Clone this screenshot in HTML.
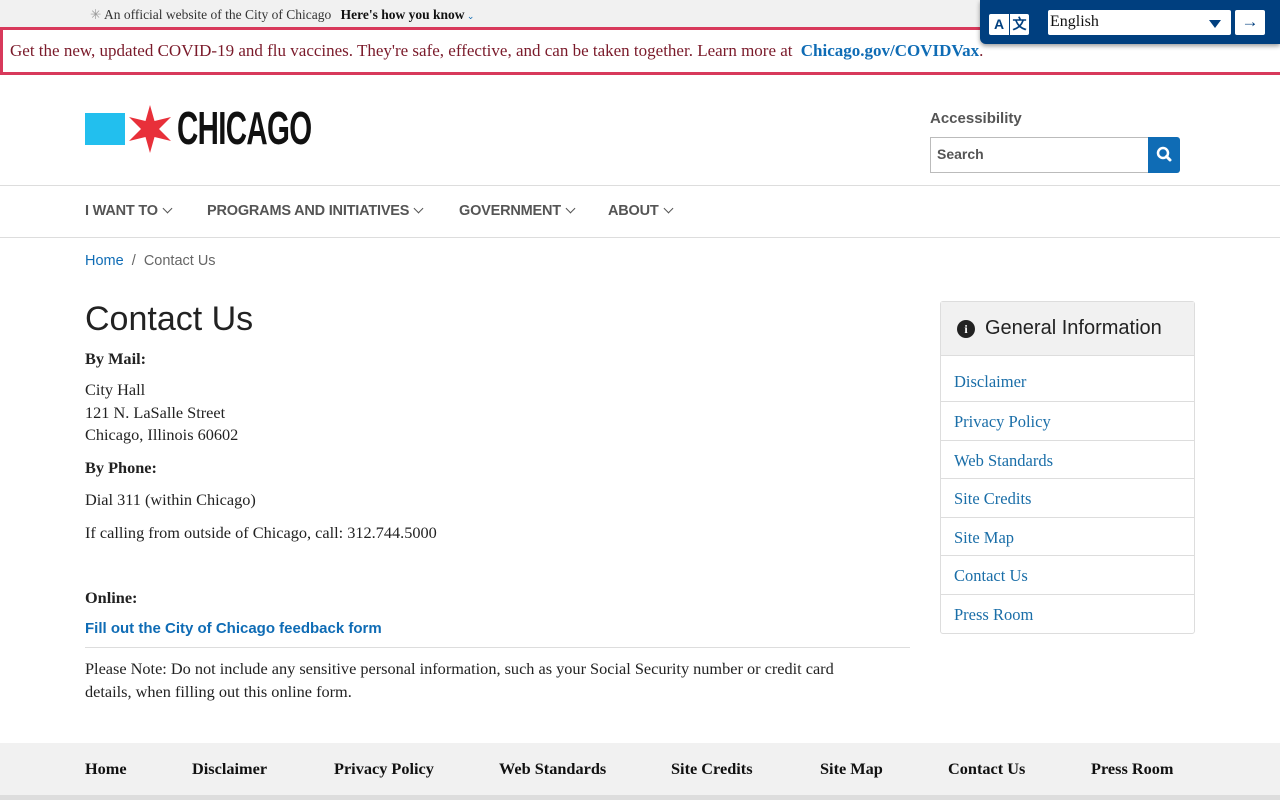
<!DOCTYPE html>
<html><head><meta charset="utf-8"><style>
*{box-sizing:border-box;margin:0;padding:0}
body{width:1280px;height:800px;overflow:hidden;background:#fff;font-family:"Liberation Serif",serif;color:#222;position:relative}
a{color:#0f6cb5;text-decoration:none}
.top{height:28px;background:#f1f1f1;font-size:13.5px;color:#333;padding-left:90px;line-height:30px}
.top b{margin-left:6px;color:#111}
.alert{position:absolute;top:27px;left:0;width:1280px;height:48px;border:3px solid #d8395b;border-right:none;font-size:17px;color:#7a1a2a;padding-left:7px;line-height:42px;white-space:nowrap}
.alert a{font-weight:bold;margin-left:4px}
.tr{position:absolute;top:0;left:980px;width:300px;height:44px;background:#003f7f;border-radius:0 0 0 6px;box-shadow:0 2px 5px rgba(0,0,0,.4)}
.az{position:absolute;left:9px;top:14px;width:40px;height:21px;background:#fff;border-radius:2px;font:bold 14px "Liberation Sans",sans-serif;color:#003f7f;display:flex}
.az span{width:20px;text-align:center;line-height:21px}
.az span+span{border-left:1px solid #003f7f}
.sel{position:absolute;left:68px;top:10px;width:183px;height:25px;background:#fff;border-radius:2px;font-size:16px;line-height:24px;padding-left:2px;color:#111}
.sel i{position:absolute;right:10px;top:10px;border:6px solid transparent;border-top:8px solid #003f7f;border-bottom:0}
.go{position:absolute;left:255px;top:10px;width:30px;height:25px;background:#fff;border-radius:2px;color:#003f7f;font:bold 17px "Liberation Sans",sans-serif;text-align:center;line-height:24px}
.logo{position:absolute;top:105px;left:85px}
.sq{position:absolute;left:0;top:8px;width:40px;height:32px;background:#22bfee}
.ch{position:absolute;left:92px;top:-4px;font:bold 46px "Liberation Sans",sans-serif;letter-spacing:-1px;color:#111;transform:scaleX(.64);transform-origin:left;white-space:nowrap}
.acc{position:absolute;left:930px;top:110px;font:bold 15px "Liberation Sans",sans-serif;color:#555}
.srch{position:absolute;left:930px;top:137px;width:218px;height:36px;border:1px solid #bbb;border-right:none;font:bold 14px "Liberation Sans",sans-serif;color:#555;padding:8px 6px}
.sbtn{position:absolute;left:1148px;top:137px;width:32px;height:36px;background:#0f6cb5;border-radius:0 3px 3px 0}
.nav{position:absolute;top:185px;left:0;width:1280px;height:53px;border-top:1px solid #ddd;border-bottom:1px solid #ddd;font:bold 14.5px "Liberation Sans",sans-serif;color:#555;letter-spacing:-.2px}
.nav span{position:absolute;top:17px}
.nav span:after{content:"";display:inline-block;width:6px;height:6px;border-right:1.5px solid #555;border-bottom:1.5px solid #555;transform:rotate(45deg);margin-left:6px;position:relative;top:-3px}
.bc{position:absolute;top:253px;left:85px;font:14.5px "Liberation Sans",sans-serif;color:#666}
h1{position:absolute;top:300px;left:85px;font:500 34px "Liberation Sans",sans-serif;color:#222}
.main{position:absolute;left:85px;top:348px;width:825px;font-size:16.3px;line-height:22.5px}
.main p{position:absolute;left:0;white-space:nowrap}
.note{border-top:1px solid #ddd;width:825px;white-space:normal!important;padding-top:10px;padding-right:60px}
.side{position:absolute;left:940px;top:301px;width:255px;border:1px solid #ddd;border-radius:3px}
.sh{height:54px;background:#f1f1f1;border-bottom:1px solid #ddd;font:20px "Liberation Sans",sans-serif;color:#222;padding-left:16px;display:flex;align-items:center;gap:10px}
.sh i{width:18px;height:18px;border-radius:50%;background:#222;color:#fff;font:bold 12px "Liberation Serif",serif;text-align:center;line-height:18px;font-style:normal}
.side a{display:block;height:38.5px;border-bottom:1px solid #ddd;font-size:16.5px;padding:0 13px;line-height:40px;color:#1a6ea8}
.side a:first-of-type{height:46px;line-height:52px}
.side a:last-child{border-bottom:none}
.foot{position:absolute;top:743px;left:0;width:1280px;height:52px;background:#f1f1f1;font-weight:bold;font-size:16.3px;color:#111}
.foot span{position:absolute;top:16px}
.fb{position:absolute;top:795px;left:0;width:1280px;height:5px;background:#ddd}
</style></head><body>
<div class="top"><span style="color:#999">✳</span> An official website of the City of Chicago <b>Here's how you know</b><span style="color:#0f6cb5;font-size:9px"> ⌄</span></div>
<div class="alert">Get the new, updated COVID-19 and flu vaccines. They're safe, effective, and can be taken together. Learn more at <a>Chicago.gov/COVIDVax</a>.</div>
<div class="tr"><div class="az"><span>A</span><span>文</span></div><div class="sel">English<i></i></div><div class="go">→</div></div>
<div class="logo"><div class="sq"></div>
<svg style="position:absolute;left:44px;top:0" width="42" height="48" viewBox="-21 -24 42 48"><polygon fill="#e8303a" points="0,-24 4.5,-8 21,-12 9,0 21,12 4.5,8 0,24 -4.5,8 -21,12 -9,0 -21,-12 -4.5,-8"/></svg>
<div class="ch">CHICAGO</div></div>
<div class="acc">Accessibility</div>
<div class="srch">Search</div>
<div class="sbtn"><svg width="32" height="36" viewBox="0 0 32 36"><circle cx="15" cy="16" r="5" fill="none" stroke="#fff" stroke-width="2.5"/><line x1="18.5" y1="19.5" x2="22" y2="23" stroke="#fff" stroke-width="3" stroke-linecap="round"/></svg></div>
<div class="nav"><span style="left:85px">I WANT TO</span><span style="left:207px">PROGRAMS AND INITIATIVES</span><span style="left:459px">GOVERNMENT</span><span style="left:608px">ABOUT</span></div>
<div class="bc"><a>Home</a> &nbsp;/&nbsp; Contact Us</div>
<h1>Contact Us</h1>
<div class="main">
<p style="top:0"><b>By Mail:</b></p>
<p style="top:31px">City Hall<br>121 N. LaSalle Street<br>Chicago, Illinois 60602</p>
<p style="top:109px"><b>By Phone:</b></p>
<p style="top:141px">Dial 311 (within Chicago)</p>
<p style="top:174px">If calling from outside of Chicago, call: 312.744.5000</p>
<p style="top:239px"><b>Online:</b></p>
<p style="top:269px"><a style="font:bold 15px 'Liberation Sans',sans-serif">Fill out the City of Chicago feedback form</a></p>
<p class="note" style="top:299px">Please Note: Do not include any sensitive personal information, such as your Social Security number or credit card details, when filling out this online form.</p>
</div>
<div class="side"><div class="sh"><i>i</i>General Information</div>
<a>Disclaimer</a><a>Privacy Policy</a><a>Web Standards</a><a>Site Credits</a><a>Site Map</a><a>Contact Us</a><a>Press Room</a></div>
<div class="foot"><span style="left:85px">Home</span><span style="left:192px">Disclaimer</span><span style="left:334px">Privacy Policy</span><span style="left:499px">Web Standards</span><span style="left:671px">Site Credits</span><span style="left:820px">Site Map</span><span style="left:948px">Contact Us</span><span style="left:1091px">Press Room</span></div>
<div class="fb"></div>
</body></html>
